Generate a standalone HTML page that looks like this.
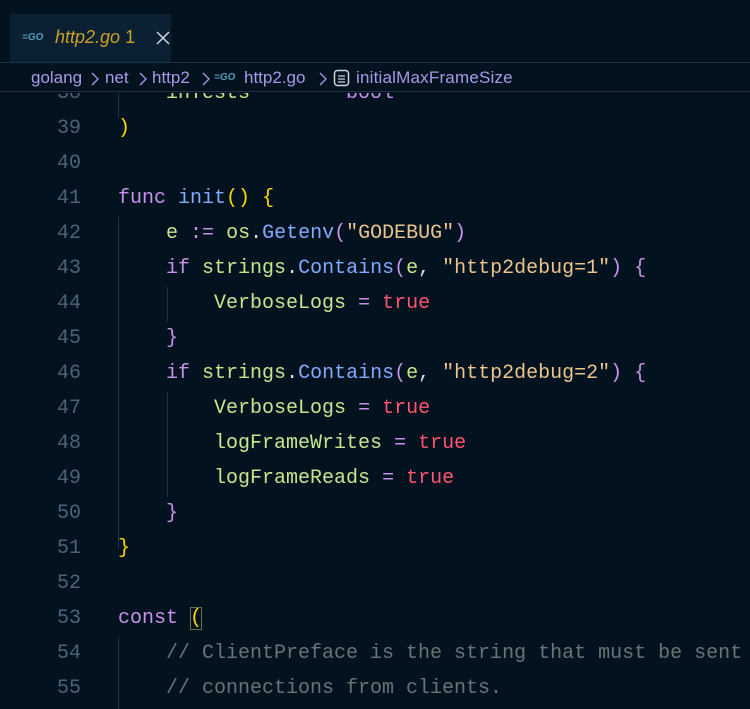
<!DOCTYPE html>
<html><head><meta charset="utf-8"><style>
body{margin:0;width:750px;height:709px;background:#02121e;overflow:hidden;position:relative;font-family:"Liberation Mono",monospace}
.tabbar{position:absolute;left:0;top:0;width:750px;height:62px;background:#02121e}
.tab{position:absolute;left:10px;top:14px;width:161px;height:48px;background:#0b2033}
.tab .t{position:absolute;left:45px;top:13px;font:italic 18px "Liberation Sans",sans-serif;color:#c9a227}
.go{font:bold italic 10px "Liberation Sans",sans-serif;color:#519aba;position:absolute}
.bc{position:absolute;left:0;top:62px;width:750px;height:30px;border-top:1px solid #1d3344;border-bottom:1px solid #1d3344;box-sizing:border-box;font:17px "Liberation Sans",sans-serif;color:#a99ae8}
.bc span{position:absolute;top:5px}
.bc svg.ch{position:absolute;top:9px}
.l{position:absolute;left:0;height:35px;line-height:35px;font-size:20px;white-space:pre;width:750px}
.n{position:absolute;left:0;width:81px;text-align:right;color:#4b6479}
.c{position:absolute;left:118px;color:#d6deeb}
.k{color:#c792ea}.f{color:#82aaff}.v{color:#c3e88d}.s{color:#ecc48d}.b{color:#ff5370}.y{color:#ffd700}.p{color:#c792ea}.cm{color:#637777}.w{color:#d6deeb}
.g{position:absolute;width:1px;background:#1e3448}
</style></head><body>
<div class="tabbar"></div>
<div class="tab"><span class="go" style="left:12px;top:18px">=GO</span><span class="t">http2.go <span style="font-style:normal">1</span></span>
<svg style="position:absolute;left:146px;top:17px" width="14" height="14"><path d="M1 1L13 13M13 1L1 13" stroke="#d0d6de" stroke-width="1.5"/></svg></div>
<div class="bc">
<span style="left:31px">golang</span>
<svg class="ch" style="left:90px" width="10" height="14"><path d="M2 1L8 7L2 13" fill="none" stroke="#a99ae8" stroke-width="1.3"/></svg>
<span style="left:105px">net</span>
<svg class="ch" style="left:138px" width="10" height="14"><path d="M2 1L8 7L2 13" fill="none" stroke="#a99ae8" stroke-width="1.3"/></svg>
<span style="left:152px">http2</span>
<svg class="ch" style="left:201px" width="10" height="14"><path d="M2 1L8 7L2 13" fill="none" stroke="#a99ae8" stroke-width="1.3"/></svg>
<i class="go" style="left:214px;top:9px">=GO</i>
<span style="left:244px">http2.go</span>
<svg class="ch" style="left:318px" width="10" height="14"><path d="M2 1L8 7L2 13" fill="none" stroke="#a99ae8" stroke-width="1.3"/></svg>
<svg style="position:absolute;left:333px;top:6px" width="18" height="18"><rect x="1.5" y="1.5" width="14" height="15" rx="3" fill="none" stroke="#d0d6de" stroke-width="1.5"/><path d="M5 7H12M5 10H12M5 13H12" stroke="#d0d6de" stroke-width="1.3"/></svg>
<span style="left:356px;letter-spacing:0.2px">initialMaxFrameSize</span></div>

<div style="position:absolute;left:0;top:93px;width:750px;height:616px;overflow:hidden">
<div class="g" style="left:118px;top:-5px;height:30px"></div>
<div class="g" style="left:118px;top:124px;height:332px"></div>
<div class="g" style="left:167px;top:194px;height:35px"></div>
<div class="g" style="left:167px;top:299px;height:105px"></div>
<div class="g" style="left:118px;top:544px;height:80px"></div>
<div class="l" style="top:-17px"><span class="n">38</span><span class="c">    <span class="v">inTests</span>        <span class="k">bool</span></span></div>
<div class="l" style="top:18px"><span class="n">39</span><span class="c y">)</span></div>
<div class="l" style="top:53px"><span class="n">40</span></div>
<div class="l" style="top:88px"><span class="n">41</span><span class="c"><span class="k">func</span> <span class="f">init</span><span class="y">()</span> <span class="y">{</span></span></div>
<div class="l" style="top:123px"><span class="n">42</span><span class="c">    <span class="v">e</span> <span class="k">:=</span> <span class="v">os</span>.<span class="f">Getenv</span><span class="p">(</span><span class="s">"GODEBUG"</span><span class="p">)</span></span></div>
<div class="l" style="top:158px"><span class="n">43</span><span class="c">    <span class="k">if</span> <span class="v">strings</span>.<span class="f">Contains</span><span class="p">(</span><span class="v">e</span>, <span class="s">"http2debug=1"</span><span class="p">)</span> <span class="p">{</span></span></div>
<div class="l" style="top:193px"><span class="n">44</span><span class="c">        <span class="v">VerboseLogs</span> <span class="k">=</span> <span class="b">true</span></span></div>
<div class="l" style="top:228px"><span class="n">45</span><span class="c">    <span class="p">}</span></span></div>
<div class="l" style="top:263px"><span class="n">46</span><span class="c">    <span class="k">if</span> <span class="v">strings</span>.<span class="f">Contains</span><span class="p">(</span><span class="v">e</span>, <span class="s">"http2debug=2"</span><span class="p">)</span> <span class="p">{</span></span></div>
<div class="l" style="top:298px"><span class="n">47</span><span class="c">        <span class="v">VerboseLogs</span> <span class="k">=</span> <span class="b">true</span></span></div>
<div class="l" style="top:333px"><span class="n">48</span><span class="c">        <span class="v">logFrameWrites</span> <span class="k">=</span> <span class="b">true</span></span></div>
<div class="l" style="top:368px"><span class="n">49</span><span class="c">        <span class="v">logFrameReads</span> <span class="k">=</span> <span class="b">true</span></span></div>
<div class="l" style="top:403px"><span class="n">50</span><span class="c">    <span class="p">}</span></span></div>
<div class="l" style="top:438px"><span class="n">51</span><span class="c y">}</span></div>
<div class="l" style="top:473px"><span class="n">52</span></div>
<div class="l" style="top:508px"><span class="n">53</span><span class="c"><span class="k">const</span> <span class="y" style="outline:1px solid #6b6b50;outline-offset:-1px">(</span></span></div>
<div class="l" style="top:543px"><span class="n">54</span><span class="c cm">    // ClientPreface is the string that must be sent by new</span></div>
<div class="l" style="top:578px"><span class="n">55</span><span class="c cm">    // connections from clients.</span></div>
</div>
</body></html>
